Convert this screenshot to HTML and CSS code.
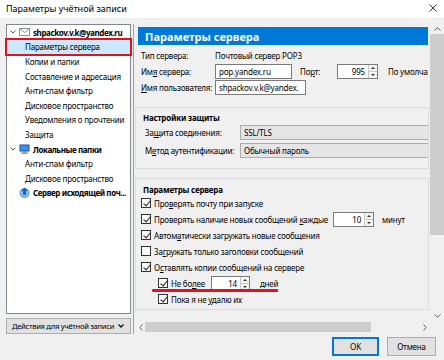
FILE: index.html
```html
<!DOCTYPE html>
<html lang="ru">
<head>
<meta charset="utf-8">
<title>Параметры учётной записи</title>
<link rel="stylesheet" href="styles.css">
</head>
<body>
<div class="titlebar">
  <span class="title">Параметры учётной записи</span>
  <svg class="close" width="8" height="8" viewBox="0 0 8 8"><path d="M0.5 0.5 L7.5 7.5 M7.5 0.5 L0.5 7.5" stroke="#333" stroke-width="1"/></svg>
</div>
<div class="main">
  <div class="leftcol">
    <div class="tree">
      <div class="row root">
        <svg class="chev" width="6" height="4" viewBox="0 0 6 4"><path d="M0.5 0.5 L3 3 L5.5 0.5" fill="none" stroke="#555" stroke-width="1"/></svg>
        <svg class="ico" width="11" height="8" viewBox="0 0 11 8"><rect x="0.5" y="0.5" width="10" height="7" fill="#fff" stroke="#909090"/><path d="M0.5 0.5 L5.5 4.5 L10.5 0.5" fill="none" stroke="#909090"/></svg>
        <b>shpackov.v.k@yandex.ru</b>
      </div>
      <div class="row sub sel">Параметры сервера</div>
      <div class="row sub">Копии и папки</div>
      <div class="row sub">Составление и адресация</div>
      <div class="row sub">Анти-спам фильтр</div>
      <div class="row sub">Дисковое пространство</div>
      <div class="row sub">Уведомления о прочтении</div>
      <div class="row sub">Защита</div>
      <div class="row root">
        <svg class="chev" width="6" height="4" viewBox="0 0 6 4"><path d="M0.5 0.5 L3 3 L5.5 0.5" fill="none" stroke="#555" stroke-width="1"/></svg>
        <svg class="ico" width="11" height="10" viewBox="0 0 11 10"><rect x="0.5" y="0.5" width="10" height="7" fill="#1d4f9e"/><rect x="1.5" y="1.5" width="8" height="5" fill="#3d8ff0"/><rect x="4" y="7.5" width="3" height="1" fill="#666"/><rect x="2" y="8.5" width="7" height="1.3" fill="#888"/></svg>
        <b>Локальные папки</b>
      </div>
      <div class="row sub">Анти-спам фильтр</div>
      <div class="row sub">Дисковое пространство</div>
      <div class="row root nochev">
        <svg class="ico" width="11" height="11" viewBox="0 0 11 11"><circle cx="5.5" cy="6" r="4.5" fill="#8cc4f0" stroke="#2f7fd0" stroke-width="0.8"/><path d="M5.5 0.5 L9 4 L7 4 L7 8 L4 8 L4 4 L2 4 Z" fill="#1f63c0"/></svg>
        <b>Сервер исходящей поч...</b>
      </div>
    </div>
    <div class="actions">
      <span>Действия для учётной записи</span>
      <svg width="6" height="4" viewBox="0 0 6 4"><path d="M0.5 0.5 L3 3 L5.5 0.5" fill="none" stroke="#111" stroke-width="1.3"/></svg>
    </div>
  </div>
  <div class="pane">
    <div class="viewport">
      <div class="content">
        <div class="header">Параметры сервера</div>
        <div class="frow"><span class="lab">Тип сервера:</span><span>Почтовый сервер POP3</span></div>
        <div class="frow"><span class="lab">Им<u>я</u> сервера:</span><span class="input w-host">pop.yandex.ru</span><span class="portlab">По<u>р</u>т:</span><span class="num w-port"><span class="val">995</span><span class="spin"><i class="up"></i><i class="dn"></i></span></span><span class="dflt">По умолча</span></div>
        <div class="frow"><span class="lab"><u>И</u>мя пользователя:</span><span class="input w-user">shpackov.v.k@yandex.</span></div>

        <div class="group g1">
          <div class="gtitle">Настройки защиты</div>
          <div class="grow"><span class="glab">За<u>щ</u>ита соединения:</span><span class="select">SSL/TLS</span></div>
          <div class="grow"><span class="glab">М<u>е</u>тод аутентификации:</span><span class="select">Обычный пароль</span></div>
        </div>

        <div class="group g2">
          <div class="gtitle">Параметры сервера</div>
          <div class="crow"><span class="cb on"></span><span>Про<u>в</u>ерять почту при запуске</span></div>
          <div class="crow"><span class="cb on"></span><span>Проверять наличие новых сообщений <u>к</u>аждые</span><span class="num w-min"><span class="val">10</span><span class="spin"><i class="up"></i><i class="dn"></i></span></span><span class="unit">минут</span></div>
          <div class="crow"><span class="cb on"></span><span>Автом<u>а</u>тически загружать новые сообщения</span></div>
          <div class="crow"><span class="cb"></span><span>За<u>г</u>ружать только заголовки сообщений</span></div>
          <div class="crow"><span class="cb on"></span><span>О<u>с</u>тавлять копии сообщений на сервере</span></div>
          <div class="crow nest marked"><span class="cb on"></span><span>Не бо<u>л</u>ее</span><span class="num w-days"><span class="val">14</span><span class="spin"><i class="up"></i><i class="dn"></i></span></span><span class="unit2">дней</span><span class="redline"></span></div>
          <div class="crow nest"><span class="cb on"></span><span>Пока я не <u>у</u>далю их</span></div>
        </div>
      </div>
    </div>
    <div class="vscroll">
      <svg width="7" height="4" viewBox="0 0 7 4"><path d="M0.5 3.5 L3.5 0.8 L6.5 3.5" fill="none" stroke="#606060" stroke-width="1"/></svg>
      <div class="vtrack"><div class="vthumb"></div></div>
      <svg width="7" height="4" viewBox="0 0 7 4"><path d="M0.5 0.5 L3.5 3.2 L6.5 0.5" fill="none" stroke="#606060" stroke-width="1"/></svg>
    </div>
    <div class="hscroll">
      <svg width="4" height="7" viewBox="0 0 4 7"><path d="M3.5 0.5 L0.8 3.5 L3.5 6.5" fill="none" stroke="#606060" stroke-width="1"/></svg>
      <div class="htrack"><div class="hthumb"></div></div>
      <svg width="4" height="7" viewBox="0 0 4 7"><path d="M0.5 0.5 L3.2 3.5 L0.5 6.5" fill="none" stroke="#606060" stroke-width="1"/></svg>
    </div>
    <div class="corner"></div>
  </div>
</div>
<div class="footer">
  <div class="btn ok">OK</div>
  <div class="btn cancel">Отмена</div>
</div>
</body>
</html>
```

FILE: styles.css
```css
* { box-sizing: border-box; }
html, body { margin: 0; padding: 0; }
body {
  width: 444px;
  height: 360px;
  overflow: hidden;
  background: #f0f0f0;
  font-family: "Noto Sans", "Open Sans", sans-serif;
  font-size: 8px;
  letter-spacing: -0.2px;
  color: #000;
}
u { text-decoration: underline; text-underline-offset: 1px; }

.titlebar {
  height: 18px;
  background: #fff;
  display: flex;
  align-items: center;
  justify-content: space-between;
  padding: 0 7px 2px 6px;
}
.title { font-size: 9px; letter-spacing: 0; color: #000; }

.main {
  display: flex;
  gap: 2px;
  padding: 6px 0 0 6px;
  height: 316px;
}
.leftcol {
  width: 125px;
  display: flex;
  flex-direction: column;
  gap: 4px;
}
.tree {
  height: 290px;
  background: #fff;
  border: 1px solid #828790;
}
.row {
  height: 14.6px;
  display: flex;
  align-items: center;
  white-space: nowrap;
}
.row b { font-weight: 700; letter-spacing: -0.4px; }
.row.root { padding-left: 3px; }
.row.root .chev { margin-right: 3px; flex: none; }
.row.root .ico { margin-right: 3px; flex: none; }
.row.root.nochev { padding-left: 12px; }
.row.sub { padding-left: 18px; }
.row.sel {
  background: #cce8ff;
  outline: 2px solid #e3111b;
}
.actions {
  height: 16px;
  background: #e1e1e1;
  border: 1px solid #adadad;
  display: flex;
  align-items: center;
  justify-content: space-between;
  padding: 0 6px 0 5px;
  white-space: nowrap;
  font-size: 7.6px;
  letter-spacing: -0.3px;
}
.actions svg { flex: none; }

.pane {
  flex: 1;
  display: grid;
  grid-template-columns: 1fr 14px;
  grid-template-rows: 1fr 14px;
  border-left: 1px solid #a0a0a0;
}
.viewport {
  overflow: hidden;
  min-width: 0;
}
.content {
  padding: 3px 2px 0 4px;
  width: 296px;
}
.header {
  height: 18px;
  background: #0078d7;
  color: #fff;
  font-weight: 700;
  font-size: 11px;
  letter-spacing: 0;
  display: flex;
  align-items: center;
  padding-left: 7px;
  margin-bottom: 2px;
}
.frow {
  height: 16px;
  display: flex;
  align-items: center;
  white-space: nowrap;
  padding-left: 3px;
}
.lab { width: 74px; flex: none; }
.input {
  height: 15px;
  background: #fff;
  border: 1px solid #7a7a7a;
  display: flex;
  align-items: center;
  padding-left: 3px;
  overflow: hidden;
  flex: none;
}
.w-host { width: 77px; }
.w-user { width: 91px; }
.portlab { margin-left: 8px; width: 37px; flex: none; }
.num {
  height: 15px;
  background: #fff;
  border: 1px solid #7a7a7a;
  display: flex;
  align-items: stretch;
  flex: none;
}
.num .val {
  flex: 1;
  text-align: right;
  padding-right: 3px;
  display: flex;
  align-items: center;
  justify-content: flex-end;
}
.spin {
  width: 9px;
  border-left: 1px solid #c8c8c8;
  display: flex;
  flex-direction: column;
  background: #f3f3f3;
}
.spin i {
  flex: 1;
  position: relative;
}
.spin i.up { border-bottom: 1px solid #c8c8c8; }
.spin i::after {
  content: "";
  position: absolute;
  left: 2px;
  border-left: 2px solid transparent;
  border-right: 2px solid transparent;
}
.spin i.up::after { top: 2px; border-bottom: 2px solid #333; }
.spin i.dn::after { top: 2px; border-top: 2px solid #333; }
.w-port { width: 41px; }
.dflt { margin-left: 10px; }

.group {
  margin-left: -3px;
  margin-right: -1px;
  border: 1px solid #dcdcdc;
  padding-left: 7px;
}
.gtitle {
  height: 11px;
  font-weight: 700;
  display: flex;
  align-items: center;
  white-space: nowrap;
}
.g1 {
  margin-top: 12px;
  padding-top: 4px;
  padding-bottom: 9px;
}
.grow {
  height: 18px;
  display: flex;
  align-items: center;
  white-space: nowrap;
  padding-left: 2px;
}
.glab { width: 95px; flex: none; }
.select {
  flex: 1;
  height: 15px;
  background: #e5e5e5;
  border: 1px solid #acacac;
  border-right: none;
  display: flex;
  align-items: center;
  padding-left: 3px;
}
.g2 {
  margin-top: 9px;
  padding-top: 5px;
  padding-bottom: 2px;
}
.crow {
  height: 16px;
  display: flex;
  align-items: center;
  white-space: nowrap;
  margin-left: -2px;
  position: relative;
}
.crow.nest { padding-left: 17px; }
.cb {
  width: 10px;
  height: 10px;
  border: 1px solid #333;
  background: #fff;
  margin-right: 3px;
  flex: none;
  position: relative;
}
.cb.on::after {
  content: "";
  position: absolute;
  left: 2.5px;
  top: 0px;
  width: 3px;
  height: 6px;
  border-right: 1.2px solid #222;
  border-bottom: 1.2px solid #222;
  transform: rotate(40deg);
}
.w-min { width: 41px; margin-left: 5px; }
.unit { margin-left: 8px; }
.w-days { width: 39px; margin-left: 6px; }
.unit2 { margin-left: 10px; }
.redline {
  position: absolute;
  left: 11px;
  top: 14px;
  width: 126px;
  height: 2.5px;
  background: #e3111b;
  border-radius: 1px;
}

.vscroll {
  display: flex;
  flex-direction: column;
  align-items: center;
  padding: 3px 0 2px;
  background: #f0f0f0;
}
.vtrack { flex: 1; width: 100%; padding: 3px 0; }
.vthumb { width: 100%; height: 201px; background: #cdcdcd; }
.hscroll {
  display: flex;
  align-items: center;
  padding: 0 3px 0 5px;
  background: #f0f0f0;
}
.htrack { flex: 1; height: 100%; padding: 2px 4px 2px 2px; }
.hthumb { width: 226px; height: 100%; background: #cdcdcd; }
.corner { background: #f0f0f0; }

.footer {
  display: flex;
  justify-content: flex-end;
  gap: 8px;
  padding: 3px 8px 0 0;
}
.btn {
  height: 19px;
  background: #e1e1e1;
  border: 1px solid #adadad;
  display: flex;
  align-items: center;
  justify-content: center;
}
.btn.ok { width: 47px; border: 1px solid #0078d7; box-shadow: inset 0 0 0 1px #0078d7; }
.btn.cancel { width: 49px; }
```
